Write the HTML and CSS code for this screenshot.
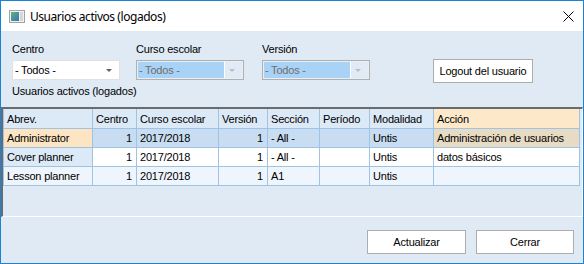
FILE: index.html
```html
<!DOCTYPE html>
<html lang="es">
<head>
    <meta charset="UTF-8">
    <title>Usuarios activos (logados)</title>
    <link rel="stylesheet" href="styles.css">
</head>
<body>
    <div class="window">
        <div class="titlebar">
            <svg class="title-icon" width="16" height="13" viewBox="0 0 16 13">
                <defs>
                    <linearGradient id="panel" x1="0" y1="0" x2="1" y2="1">
                        <stop offset="0" stop-color="#5fb37c"/>
                        <stop offset="1" stop-color="#3a72b5"/>
                    </linearGradient>
                </defs>
                <rect x="0.5" y="0.5" width="15" height="12" fill="#f2f2f2" stroke="#a3a3a3"/>
                <rect x="2" y="2" width="8" height="9" fill="url(#panel)"/>
                <rect x="11" y="2" width="3" height="9" fill="#d6d6d6"/>
            </svg>
            <span class="title">Usuarios activos (logados)</span>
            <svg class="close" width="11" height="11" viewBox="0 0 11 11">
                <path d="M0.5 0.5 L10.5 10.5 M10.5 0.5 L0.5 10.5" stroke="#000" stroke-width="1"/>
            </svg>
        </div>

        <div class="content">
            <div class="filters">
                <div class="field">
                    <label>Centro</label>
                    <div class="combo">
                        <span class="combo-text">- Todos -</span>
                        <span class="combo-arrow"></span>
                    </div>
                </div>
                <div class="field">
                    <label>Curso escolar</label>
                    <div class="combo disabled">
                        <span class="combo-text">- Todos -</span>
                        <span class="combo-arrow"></span>
                    </div>
                </div>
                <div class="field">
                    <label>Versión</label>
                    <div class="combo disabled">
                        <span class="combo-text">- Todos -</span>
                        <span class="combo-arrow"></span>
                    </div>
                </div>
                <button class="btn logout">Logout del usuario</button>
            </div>

            <div class="caption">Usuarios activos (logados)</div>

            <div class="datagrid">
                <div class="dg-table">
                    <div class="dg-row dg-head">
                        <div class="rh">Abrev.</div>
                        <div>Centro</div>
                        <div>Curso escolar</div>
                        <div>Versión</div>
                        <div>Sección</div>
                        <div>Período</div>
                        <div>Modalidad</div>
                        <div class="current">Acción</div>
                    </div>
                    <div class="dg-row selected">
                        <div class="rh current">Administrator</div>
                        <div class="num">1</div>
                        <div>2017/2018</div>
                        <div class="num">1</div>
                        <div>- All -</div>
                        <div></div>
                        <div>Untis</div>
                        <div class="current-cell">Administración de usuarios</div>
                    </div>
                    <div class="dg-row">
                        <div class="rh">Cover planner</div>
                        <div class="num">1</div>
                        <div>2017/2018</div>
                        <div class="num">1</div>
                        <div>- All -</div>
                        <div></div>
                        <div>Untis</div>
                        <div>datos básicos</div>
                    </div>
                    <div class="dg-row alt">
                        <div class="rh">Lesson planner</div>
                        <div class="num">1</div>
                        <div>2017/2018</div>
                        <div class="num">1</div>
                        <div>A1</div>
                        <div></div>
                        <div>Untis</div>
                        <div></div>
                    </div>
                </div>
            </div>

            <div class="footer">
                <button class="btn btn-refresh">Actualizar</button>
                <button class="btn btn-close">Cerrar</button>
            </div>
        </div>
    </div>
</body>
</html>
```

FILE: styles.css
```css
* {
  box-sizing: border-box;
}

body {
  margin: 0;
  font-family: "Liberation Sans", Arial, sans-serif;
  font-size: 11px;
  letter-spacing: -0.2px;
  color: #000;
}

.window {
  width: 584px;
  height: 264px;
  border: 1px solid #1883d7;
  background: #dfeaf5;
  display: flex;
  flex-direction: column;
}

/* title bar */
.titlebar {
  height: 30px;
  flex-shrink: 0;
  background: #fff;
  display: flex;
  align-items: center;
  padding: 0 9px 0 8px;
}

.title-icon {
  margin-right: 5px;
}

.title {
  font-family: "Noto Sans", "Liberation Sans", sans-serif;
  font-size: 12px;
  letter-spacing: -0.45px;
  color: #000;
}

.close {
  margin-left: auto;
}

/* form area */
.content {
  flex: 1;
  display: flex;
  flex-direction: column;
  padding-top: 12px;
}

.filters {
  display: grid;
  grid-template-columns: 124px 126px 171px auto;
  padding-left: 11px;
  line-height: 13px;
  align-items: start;
}

.field label {
  display: block;
}

.combo {
  margin-top: 4px;
  width: 108px;
  height: 20px;
  background: #fff;
  border: 1px solid #e1e1e1;
  display: flex;
  line-height: 18px;
}

.combo-text {
  flex: 1;
  padding-left: 2px;
}

.combo-arrow {
  width: 17px;
  position: relative;
}

.combo-arrow::after {
  content: "";
  position: absolute;
  left: 4px;
  top: 8px;
  border-left: 3px solid transparent;
  border-right: 3px solid transparent;
  border-top: 3px solid #606060;
}

.combo.disabled {
  border-color: #b0b0b0;
  background: #e6eef6;
  padding: 1px;
  line-height: 16px;
}

.combo.disabled .combo-text {
  padding-left: 1px;
  background: #a8d2f6;
  color: #6e6e6e;
  border-right: 1px solid #fff;
}

.combo.disabled .combo-arrow {
  background: #e1ebf5;
}

.combo.disabled .combo-arrow::after {
  top: 7px;
  border-top-color: #bdbdbd;
}

.btn {
  font-family: "Liberation Sans", Arial, sans-serif;
  font-size: 11px;
  letter-spacing: -0.2px;
  color: #000;
  background: #fff;
  border: 1px solid #adadad;
  height: 24px;
  padding: 0;
}

.logout {
  margin-top: 16px;
  width: 100px;
}

.caption {
  margin-top: 2px;
  padding-left: 11px;
  line-height: 13px;
}

/* data grid */
.datagrid {
  margin-top: 9px;
  height: 110px;
  flex-shrink: 0;
  border-top: 2px solid #6b6b6b;
  border-left: 2px solid #6b6b6b;
  border-right: 1px solid #fff;
  border-bottom: 1px solid #fff;
  overflow: hidden;
}

.dg-table {
  display: grid;
  grid-template-columns: 89px 44px 82px 49px 52px 50px 64px 146px;
  width: fit-content;
  border-left: 1px solid #9fc3e5;
}

.dg-row {
  display: contents;
}

.dg-row > div {
  height: 19px;
  padding: 3px 3px 0;
  line-height: 13px;
  white-space: nowrap;
  overflow: hidden;
  background: #fff;
  border-right: 1px solid #9fc3e5;
  border-bottom: 1px solid #9fc3e5;
}

.dg-head > div {
  height: 20px;
  padding-top: 4px;
  background: #dce9f6;
}

.dg-row > .rh {
  background: #dce9f6;
}

.dg-row.selected > div {
  background: #c8ddf1;
}

.dg-row.alt > div {
  background: #eef5fc;
}

.dg-row > .current,
.dg-row.selected > .current {
  background: #fde5c3;
}

.dg-head > .current {
  background: #fde8ca;
}

.dg-row.selected > .current-cell {
  background: #e8dbc3;
}

.dg-row > .num {
  text-align: right;
  padding-right: 4px;
}

/* buttons at the bottom */
.footer {
  display: flex;
  justify-content: flex-end;
  gap: 10px;
  padding: 13px 9px 0 0;
}

.btn-refresh {
  width: 99px;
}

.btn-close {
  width: 98px;
}
```
